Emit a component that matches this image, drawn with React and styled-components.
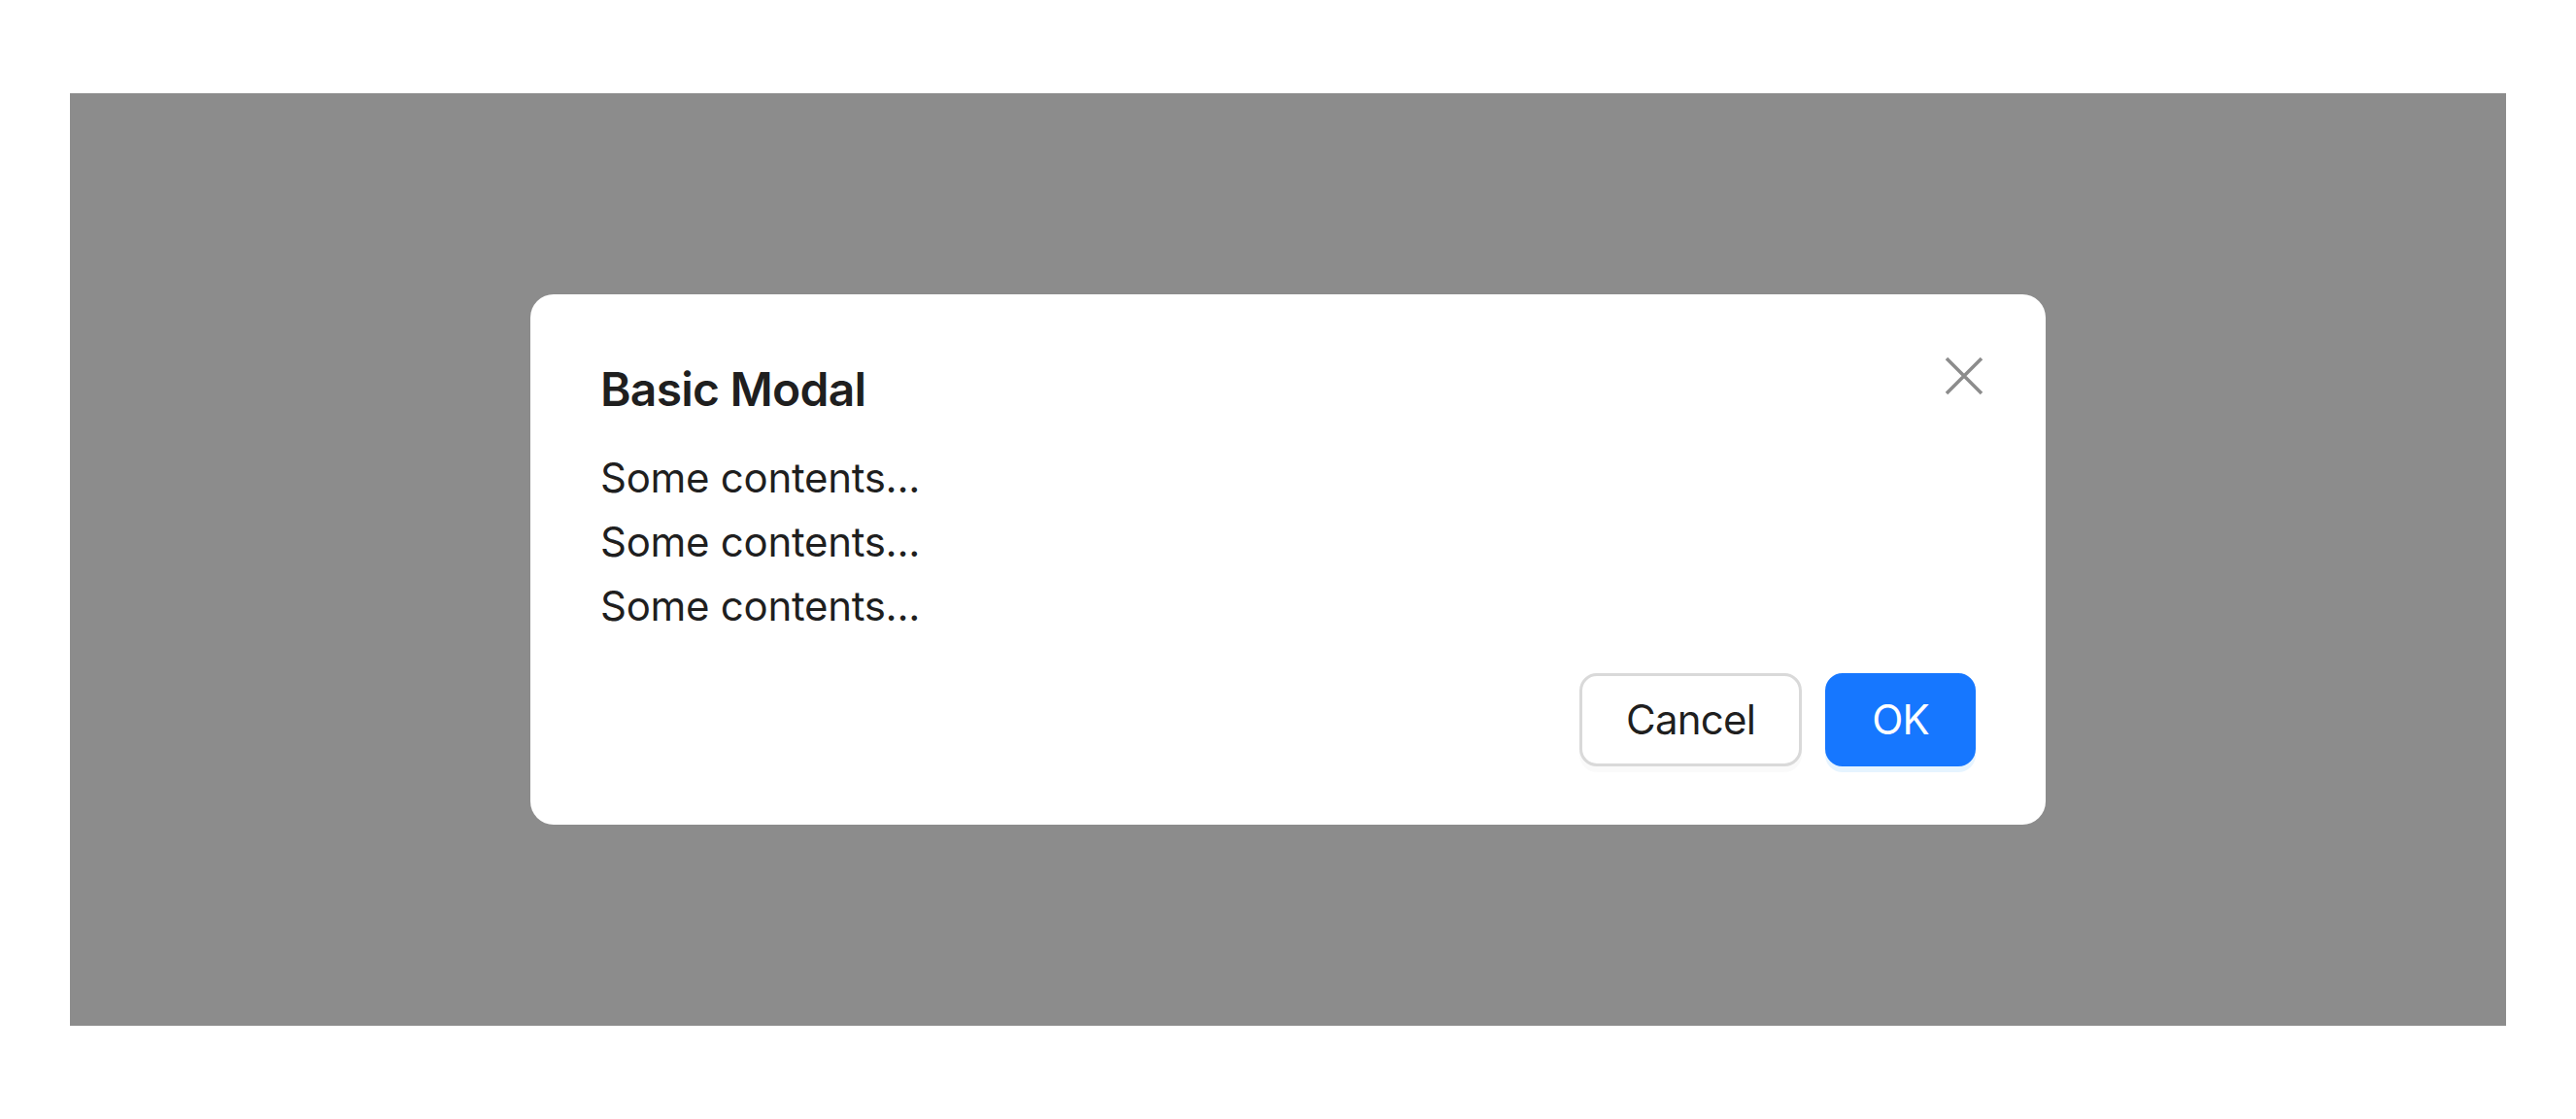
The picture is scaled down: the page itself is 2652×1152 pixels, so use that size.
import React from "react";
import styled, { createGlobalStyle } from "styled-components";

const Global = createGlobalStyle`
  html, body { margin: 0; padding: 0; background: #ffffff; }
  body { font-family: Inter, "Noto Sans", "Liberation Sans", sans-serif; }
  * { box-sizing: border-box; }
`;

const Page = styled.div`
  padding: 96px 72px;
  width: 2652px;
  height: 1152px;
`;

const Mask = styled.div`
  height: 960px;
  background: #8c8c8c;
  display: flex;
  align-items: center;
  justify-content: center;
`;

const Modal = styled.div`
  position: relative;
  width: 1560px;
  background: #ffffff;
  border-radius: 24px;
  padding: 60px 72px;
  color: rgba(0, 0, 0, 0.88);
  letter-spacing: -0.018em;
`;

const Title = styled.div`
  font-size: 48px;
  line-height: 72px;
  font-weight: 600;
  letter-spacing: -0.016em;
  padding-top: 2px;
  margin-bottom: 22px;
`;

const Body = styled.div`
  font-size: 42px;
  line-height: 66px;
`;

const Line = styled.p`
  margin: 0;
`;

const Footer = styled.div`
  margin-top: 36px;
  display: flex;
  justify-content: flex-end;
  gap: 24px;
`;

const Button = styled.button`
  height: 96px;
  padding: 12px 45px;
  border-radius: 18px;
  font-family: inherit;
  font-size: 42px;
  line-height: 66px;
  letter-spacing: -0.018em;
  cursor: pointer;
  border: 3px solid ${(p) => (p.$primary ? "#1677ff" : "#d9d9d9")};
  background: ${(p) => (p.$primary ? "#1677ff" : "#ffffff")};
  color: ${(p) => (p.$primary ? "#ffffff" : "rgba(0, 0, 0, 0.88)")};
  box-shadow: ${(p) =>
    p.$primary ? "0 6px 0 rgba(5, 145, 255, 0.1)" : "0 6px 0 rgba(0, 0, 0, 0.02)"};
`;

const Close = styled.button`
  position: absolute;
  top: 51px;
  right: 51px;
  width: 66px;
  height: 66px;
  padding: 0;
  border: none;
  background: transparent;
  display: flex;
  align-items: center;
  justify-content: center;
  color: rgba(0, 0, 0, 0.45);
  cursor: pointer;
`;

export default function App() {
  return (
    <>
      <Global />
      <Page>
        <Mask>
          <Modal>
            <Close aria-label="Close">
              <svg width="40" height="40" viewBox="0 0 40 40" fill="none">
                <path d="M2 2 L38 38 M38 2 L2 38" stroke="currentColor" strokeWidth="3.6" />
              </svg>
            </Close>
            <Title>Basic Modal</Title>
            <Body>
              <Line>Some contents...</Line>
              <Line>Some contents...</Line>
              <Line>Some contents...</Line>
            </Body>
            <Footer>
              <Button>Cancel</Button>
              <Button $primary>OK</Button>
            </Footer>
          </Modal>
        </Mask>
      </Page>
    </>
  );
}
